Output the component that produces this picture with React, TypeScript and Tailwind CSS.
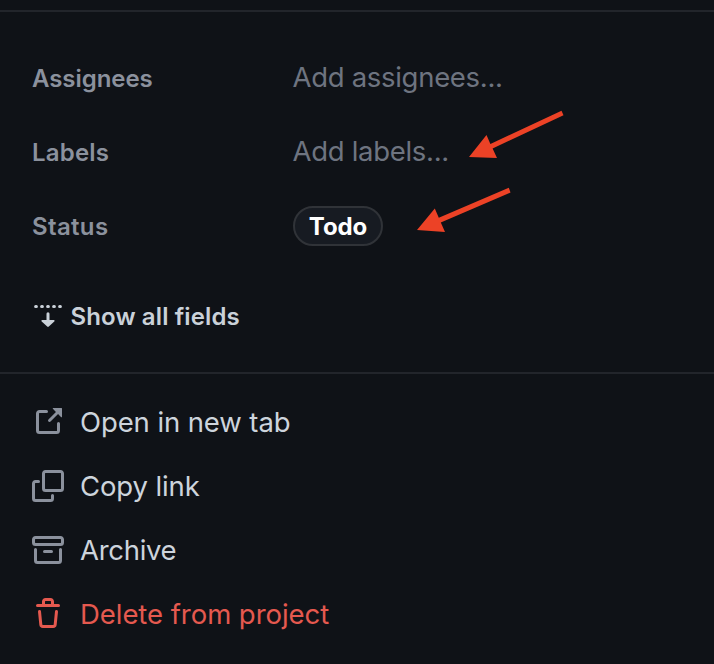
import type { ReactNode } from "react";

function Octicon({ children }: { children: ReactNode }) {
  return (
    <svg width="32" height="32" viewBox="0 0 16 16" fill="currentColor" className="shrink-0">
      {children}
    </svg>
  );
}

function Field({ label, spacing, children }: { label: string; spacing: string; children: ReactNode }) {
  return (
    <div className="flex h-[74px] items-center whitespace-nowrap">
      <div className={`w-[261px] pt-[2px] text-[24px] font-semibold text-[#8b919d] ${spacing}`}>{label}</div>
      {children}
    </div>
  );
}

function Placeholder({ children }: { children: ReactNode }) {
  return <span className="-ml-[0.5px] pb-[2px] text-[27.5px] leading-[42px] tracking-[-0.3px] text-[#6e7480]">{children}</span>;
}

function MenuItem({ icon, label, spacing, danger }: { icon: ReactNode; label: string; spacing: string; danger?: boolean }) {
  return (
    <li className={`flex h-16 items-center gap-4 whitespace-nowrap ${danger ? "text-[#e5594f]" : "text-[#8b919d]"}`}>
      <Octicon>{icon}</Octicon>
      <span className={`text-[27.5px] leading-[42px] ${spacing} ${danger ? "" : "text-[#cdd4dc]"}`}>{label}</span>
    </li>
  );
}

export default function App() {
  return (
    <main className="relative h-[664px] w-[714px] overflow-hidden bg-[#0f1217] pt-[10px] font-['Inter',sans-serif]">
      <section className="h-[362px] border-t-2 border-[#22252b] px-8 pt-[29px]">
        <Field label="Assignees" spacing="tracking-[-0.05px]">
          <Placeholder>Add assignees...</Placeholder>
        </Field>
        <Field label="Labels" spacing="tracking-[0.2px]">
          <Placeholder>Add labels...</Placeholder>
        </Field>
        <Field label="Status" spacing="tracking-[0.35px]">
          <span className="flex h-10 w-[90px] items-center justify-center rounded-full border-2 border-[#303338] bg-[#171b22] pt-[2px] text-[24px] font-[650] tracking-[-0.1px] text-white">
            Todo
          </span>
        </Field>
        <button className="mt-[37px] flex h-8 items-center gap-[6.5px] whitespace-nowrap text-[24px] font-semibold tracking-[0.12px] text-[#cad1d9]">
          <svg width="32" height="32" viewBox="0 0 32 32" fill="currentColor">
            <path d="M3.6 6.5h24.8" fill="none" stroke="currentColor" strokeWidth="3" strokeLinecap="round" strokeDasharray="0.8 5.2" />
            <path d="M14.5 13.8a1.5 1.5 0 0 1 3 0V20h4.2c1 0 1.2.8.6 1.4l-5.5 5.2a1.2 1.2 0 0 1-1.6 0l-5.5-5.2c-.6-.6-.4-1.4.6-1.4h4.2Z" />
          </svg>
          <span className="pt-[2px]">Show all fields</span>
        </button>
      </section>
      <ul className="border-t-2 border-[#22252b] px-8 pt-[16px]">
        <MenuItem
          label="Open in new tab"
          spacing="tracking-[-0.1px]"
          icon={<path d="M3.75 2h3.5a.75.75 0 0 1 0 1.5h-3.5a.25.25 0 0 0-.25.25v8.5c0 .138.112.25.25.25h8.5a.25.25 0 0 0 .25-.25v-3.5a.75.75 0 0 1 1.5 0v3.5A1.75 1.75 0 0 1 12.25 14h-8.5A1.75 1.75 0 0 1 2 12.25v-8.5C2 2.784 2.784 2 3.75 2Zm6.854-1h4.146a.25.25 0 0 1 .25.25v4.146a.25.25 0 0 1-.427.177L13.03 4.03 9.28 7.78a.751.751 0 0 1-1.042-.018.751.751 0 0 1-.018-1.042l3.75-3.75-1.543-1.543A.25.25 0 0 1 10.604 1Z" />}
        />
        <MenuItem
          label="Copy link"
          spacing="tracking-[-0.12px]"
          icon={
            <>
              <path d="M0 6.75C0 5.784.784 5 1.75 5h1.5a.75.75 0 0 1 0 1.5h-1.5a.25.25 0 0 0-.25.25v7.5c0 .138.112.25.25.25h7.5a.25.25 0 0 0 .25-.25v-1.5a.75.75 0 0 1 1.5 0v1.5A1.75 1.75 0 0 1 9.25 16h-7.5A1.75 1.75 0 0 1 0 14.25Z" />
              <path d="M5 1.75C5 .784 5.784 0 6.75 0h7.5C15.216 0 16 .784 16 1.75v7.5A1.75 1.75 0 0 1 14.25 11h-7.5A1.75 1.75 0 0 1 5 9.25Zm1.75-.25a.25.25 0 0 0-.25.25v7.5c0 .138.112.25.25.25h7.5a.25.25 0 0 0 .25-.25v-7.5a.25.25 0 0 0-.25-.25Z" />
            </>
          }
        />
        <MenuItem
          label="Archive"
          spacing="tracking-[-0.3px]"
          icon={<path d="M0 2.75C0 1.784.784 1 1.75 1h12.5c.966 0 1.75.784 1.75 1.75v1.5A1.75 1.75 0 0 1 14.25 6H1.75A1.75 1.75 0 0 1 0 4.25ZM1.75 7a.75.75 0 0 1 .75.75v5.5c0 .138.112.25.25.25h10.5a.25.25 0 0 0 .25-.25v-5.5a.75.75 0 0 1 1.5 0v5.5A1.75 1.75 0 0 1 13.25 15H2.75A1.75 1.75 0 0 1 1 13.25v-5.5A.75.75 0 0 1 1.75 7Zm0-4.5a.25.25 0 0 0-.25.25v1.5c0 .138.112.25.25.25h12.5a.25.25 0 0 0 .25-.25v-1.5a.25.25 0 0 0-.25-.25ZM6.25 8h3.5a.75.75 0 0 1 0 1.5h-3.5a.75.75 0 0 1 0-1.5Z" />}
        />
        <MenuItem
          danger
          label="Delete from project"
          spacing="tracking-[-0.05px]"
          icon={<path d="M11 1.75V3h2.25a.75.75 0 0 1 0 1.5H2.75a.75.75 0 0 1 0-1.5H5V1.75C5 .784 5.784 0 6.75 0h2.5C10.216 0 11 .784 11 1.75ZM4.496 6.675l.66 6.6a.25.25 0 0 0 .249.225h5.19a.25.25 0 0 0 .249-.225l.66-6.6a.75.75 0 0 1 1.492.149l-.66 6.6A1.748 1.748 0 0 1 10.595 15h-5.19a1.75 1.75 0 0 1-1.741-1.575l-.66-6.6a.75.75 0 1 1 1.492-.15ZM6.5 1.75V3h3V1.75a.25.25 0 0 0-.25-.25h-2.5a.25.25 0 0 0-.25.25Z" />}
        />
      </ul>
      <svg width="150" height="130" viewBox="414 108 150 130" fill="#ec4226" className="pointer-events-none absolute left-[414px] top-[108px]">
        <path d="M469 157 486.5 135 490.4 144 561.5 110.8 563.5 115.2 492.6 148.4 497 158Z" />
        <path d="M417 230 434.8 208.5 438.8 217.8 508.8 187.8 510.5 192.6 440.8 222.4 445 232Z" />
      </svg>
    </main>
  );
}
